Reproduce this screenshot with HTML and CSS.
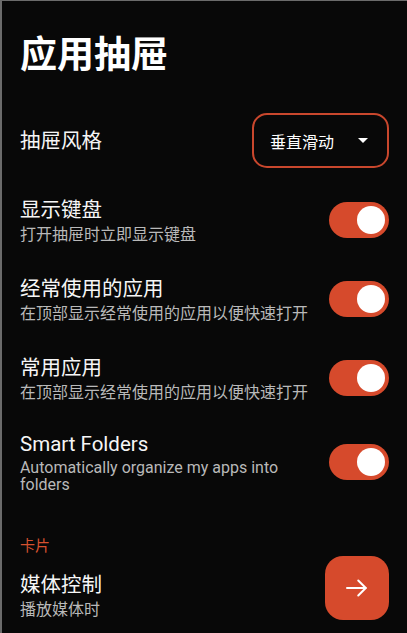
FILE: index.html
```html
<!DOCTYPE html>
<html>
<head>
<meta charset="utf-8">
<title>应用抽屉</title>
<link rel="stylesheet" href="styles.css">
</head>
<body>
<div id="screen">
	<h1 class="pageTitle">应用抽屉</h1>

	<div class="row styleRow">
		<div class="rowTitle">抽屉风格</div>
		<div class="dropdown">
			<span class="dropdownText">垂直滑动</span>
			<svg class="caret" width="10" height="5" viewBox="0 0 10 5"><polygon points="0,0 10,0 5,5" fill="#fff"/></svg>
		</div>
	</div>

	<div class="row">
		<div class="rowText">
			<div class="rowTitle">显示键盘</div>
			<div class="rowSub">打开抽屉时立即显示键盘</div>
		</div>
		<div class="toggle on"><span class="thumb"></span></div>
	</div>

	<div class="row">
		<div class="rowText">
			<div class="rowTitle">经常使用的应用</div>
			<div class="rowSub">在顶部显示经常使用的应用以便快速打开</div>
		</div>
		<div class="toggle on"><span class="thumb"></span></div>
	</div>

	<div class="row">
		<div class="rowText">
			<div class="rowTitle">常用应用</div>
			<div class="rowSub">在顶部显示经常使用的应用以便快速打开</div>
		</div>
		<div class="toggle on"><span class="thumb"></span></div>
	</div>

	<div class="row latinRow">
		<div class="rowText">
			<div class="rowTitle">Smart Folders</div>
			<div class="rowSub">Automatically organize my apps into folders</div>
		</div>
		<div class="toggle on"><span class="thumb"></span></div>
	</div>

	<div class="sectionHeader">卡片</div>

	<div class="row cardRow">
		<div class="rowText">
			<div class="rowTitle">媒体控制</div>
			<div class="rowSub">播放媒体时</div>
		</div>
		<div class="goButton">
			<svg width="30" height="30" viewBox="0 0 24 24" fill="none" stroke="#fff" stroke-width="1.6" stroke-linecap="round" stroke-linejoin="round"><path d="M4 12h15"/><path d="M13 6l6 6-6 6"/></svg>
		</div>
	</div>
</div>
</body>
</html>
```

FILE: styles.css
```css
html, body
{
	margin: 0;
	padding: 0;
	background-color: #080808;
	overflow: hidden;
}
#screen
{
	height: 632px;
	border-top: 1px solid #6b6b6b;
	border-left: 2px solid #6b6b6b;
	padding: 0 18px;
	font-family: Roboto, "Noto Sans CJK SC", sans-serif;
	color: #f6f6f6;
	overflow: hidden;
}
.pageTitle
{
	margin: 0;
	padding-top: 33px;
	font-size: 37px;
	line-height: 44px;
	font-weight: bold;
	color: #ffffff;
}
.row
{
	display: flex;
	align-items: center;
	justify-content: space-between;
	padding: 16px 0 17px 0;
}
.styleRow
{
	height: 55px;
	padding: 0;
	margin: 35px 0 13px 0;
}
.latinRow
{
	padding: 13px 0 20px 0;
}
.latinRow .rowSub
{
	line-height: 16.5px;
}
.rowText
{
	flex: 1;
	padding-right: 16px;
}
.rowTitle
{
	font-size: 20.5px;
	line-height: 26px;
}
.rowSub
{
	margin-top: 3px;
	font-size: 16px;
	line-height: 17px;
	color: #b9b9b9;
}
.dropdown
{
	box-sizing: border-box;
	width: 137px;
	height: 55px;
	border: 2px solid #c9472d;
	border-radius: 15px;
	display: flex;
	align-items: center;
	justify-content: space-between;
	padding: 0 19px 0 16px;
}
.dropdownText
{
	font-size: 16px;
	color: #ffffff;
}
.toggle
{
	position: relative;
	flex: none;
	width: 60px;
	height: 36px;
	border-radius: 18px;
	background-color: #d64a2c;
}
.toggle .thumb
{
	position: absolute;
	top: 4px;
	right: 4px;
	width: 28px;
	height: 28px;
	border-radius: 50%;
	background-color: #ffffff;
}
.sectionHeader
{
	padding-top: 23px;
	font-size: 15px;
	line-height: 20px;
	color: #d6512f;
}
.cardRow
{
	align-items: flex-start;
	padding-top: 0;
}
.cardRow .rowText
{
	padding-top: 16px;
}
.goButton
{
	flex: none;
	width: 64px;
	height: 64px;
	border-radius: 18px;
	background-color: #d64a2c;
	display: flex;
	align-items: center;
	justify-content: center;
}
```
